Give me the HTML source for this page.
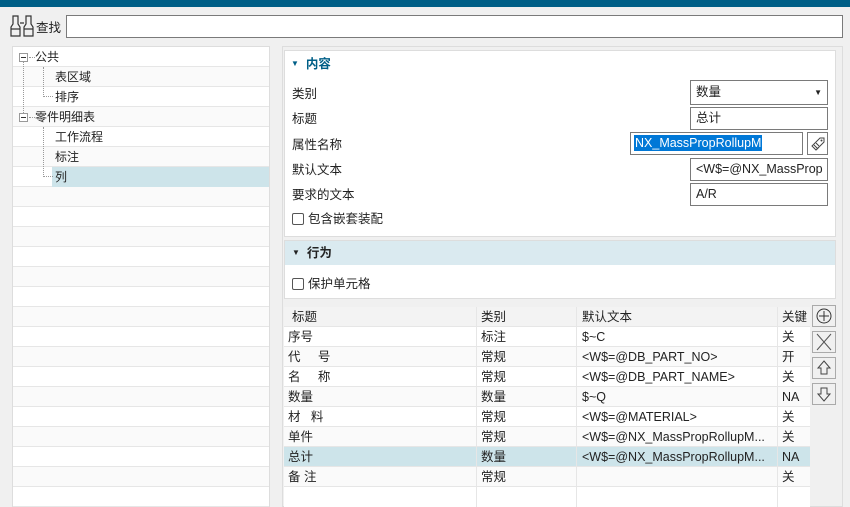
<!DOCTYPE html>
<html><head><meta charset="utf-8"><style>
*{box-sizing:border-box;margin:0;padding:0}
body{width:850px;height:507px;overflow:hidden;background:#f0f0f0;font-family:"Liberation Sans","Noto Sans CJK SC",sans-serif;font-size:12px;color:#222;position:relative}
.abs{position:absolute}
.title{left:0;top:0;width:850px;height:7px;background:#005f87}
.search{left:66px;top:15px;width:777px;height:23px;background:#fff;border:1px solid #7a7a7a}
.tree{left:12px;top:46px;width:258px;height:461px;background:#fff;border:1px solid #ddd}
.tr{position:absolute;left:0;width:256px;height:20px;border-bottom:1px solid #e6e6e6;line-height:20px}
.tr:nth-child(even){background:#fafafa}
.inp{position:absolute;background:#fff;border:1px solid #7a7a7a;height:23px;line-height:21px;padding-left:5px;font-size:12.5px;overflow:hidden;white-space:nowrap}
.lbl{position:absolute;left:292px;font-size:12.5px}
.cb{display:inline-block;width:12px;height:12px;border:1px solid #555;border-radius:2px;vertical-align:-2px;margin-right:4px;background:#fff}
.tbl{left:284px;top:307px;width:526px;height:200px;background:#fff}
.row{position:absolute;left:0;width:526px;height:20px;border-bottom:1px solid #e6e6e6;line-height:21px;font-size:12.5px}
.row span{position:absolute;top:0}
.c1{left:4px}.c2{left:197px}.c3{left:298px}.c4{left:498px}
.vl{position:absolute;top:0;width:1px;height:200px;background:#e6e6e6}
.btn{position:absolute;left:812px;width:24px;height:22px;border:1px solid #aaa;background:#f0f0f0}
.mb{position:absolute;left:6px;top:6px;width:9px;height:9px;border:1px solid #999;background:#fff}
.mb:after{content:"";position:absolute;left:1px;top:3px;width:5px;height:1px;background:#333}
</style></head><body>
<div class="abs title"></div>
<svg class="abs" style="left:10px;top:15px" width="24" height="22" viewBox="0 0 24 22"><g fill="none" stroke="#333" stroke-width="1.2"><path d="M3 1h5v8l2 3v9H1v-9l2-3z"/><path d="M16 1h5v8l2 3v9h-9v-9l2-3z"/><path d="M10 8h4M1 14h9M14 14h9"/></g></svg>
<div class="abs" style="left:36px;top:17px;font-size:12.5px">查找</div>
<div class="abs search"></div>
<div class="abs tree">
<div class="tr" style="top:0"><span class="mb"></span><span style="position:absolute;left:22px">公共</span></div>
<div class="tr" style="top:20px"><span style="position:absolute;left:42px">表区域</span></div>
<div class="tr" style="top:40px"><span style="position:absolute;left:42px">排序</span></div>
<div class="tr" style="top:60px"><span class="mb"></span><span style="position:absolute;left:22px">零件明细表</span></div>
<div class="tr" style="top:80px"><span style="position:absolute;left:42px">工作流程</span></div>
<div class="tr" style="top:100px"><span style="position:absolute;left:42px">标注</span></div>
<div class="tr" style="top:120px"><span style="position:absolute;left:39px;width:217px;height:20px;background:#cde4ea;padding-left:3px">列</span></div>
<div class="tr" style="top:140px"></div><div class="tr" style="top:160px"></div><div class="tr" style="top:180px"></div><div class="tr" style="top:200px"></div><div class="tr" style="top:220px"></div><div class="tr" style="top:240px"></div><div class="tr" style="top:260px"></div><div class="tr" style="top:280px"></div><div class="tr" style="top:300px"></div><div class="tr" style="top:320px"></div><div class="tr" style="top:340px"></div><div class="tr" style="top:360px"></div><div class="tr" style="top:380px"></div><div class="tr" style="top:400px"></div><div class="tr" style="top:420px"></div><div class="tr" style="top:440px"></div>
<div style="position:absolute;left:10px;top:15px;height:51px;border-left:1px dotted #999"></div>
<div style="position:absolute;left:16px;top:10px;width:6px;border-top:1px dotted #999"></div>
<div style="position:absolute;left:16px;top:70px;width:6px;border-top:1px dotted #999"></div>
<div style="position:absolute;left:30px;top:20px;width:10px;height:30px;border-left:1px dotted #999;border-bottom:1px dotted #999"></div>
<div style="position:absolute;left:40px;top:30px;width:0;border-top:1px dotted #999"></div>
<div style="position:absolute;left:30px;top:80px;width:10px;height:50px;border-left:1px dotted #999;border-bottom:1px dotted #999"></div>
</div>
<div class="abs" style="left:282px;top:46px;width:561px;height:461px;border:1px solid #ddd;background:#f0f0f0"></div>
<div class="abs" style="left:284px;top:50px;width:552px;height:187px;background:#fff;border:1px solid #ddd"></div>
<div class="abs" style="left:291px;top:53px;color:#005f87;font-weight:bold;font-size:12.5px"><span style="font-size:8px;vertical-align:2px">▼</span>&nbsp; 内容</div>
<div class="lbl" style="top:83px">类别</div>
<div class="lbl" style="top:108px">标题</div>
<div class="lbl" style="top:134px">属性名称</div>
<div class="lbl" style="top:159px">默认文本</div>
<div class="lbl" style="top:184px">要求的文本</div>
<div class="lbl" style="top:208px"><span class="cb"></span>包含嵌套装配</div>
<div class="inp" style="left:690px;top:80px;width:138px;height:25px;line-height:23px">数量<span style="position:absolute;right:5px;font-size:8px">▼</span></div>
<div class="inp" style="left:690px;top:107px;width:138px">总计</div>
<div class="inp" style="left:630px;top:132px;width:173px;padding-left:3px"><span style="background:#0078d7;color:#fff;padding:1px 1px">NX_MassPropRollupM</span></div>
<div class="inp" style="left:807px;top:132px;width:21px;padding:0"><svg width="19" height="21" viewBox="0 0 19 21"><path d="M4 13l8-8h4v4l-8 8z" fill="none" stroke="#444"/><circle cx="13.5" cy="7.5" r="1" fill="#444"/><path d="M6 12l4 4M8 10l3 3" stroke="#444"/></svg></div>
<div class="inp" style="left:690px;top:158px;width:138px">&lt;W$=@NX_MassProp</div>
<div class="inp" style="left:690px;top:183px;width:138px">A/R</div>
<div class="abs" style="left:284px;top:240px;width:552px;height:59px;background:#fff;border:1px solid #ddd"></div>
<div class="abs" style="left:285px;top:241px;width:550px;height:24px;background:#daeaf0;line-height:24px;padding-left:7px;font-weight:bold;font-size:12.5px"><span style="font-size:8px;vertical-align:2px">▼</span>&nbsp; 行为</div>
<div class="lbl" style="top:273px"><span class="cb"></span>保护单元格</div>
<div class="abs tbl">
<div class="row" style="top:0;background:#f3f3f3"><span class="c1" style="left:8px">标题</span><span class="c2">类别</span><span class="c3">默认文本</span><span class="c4">关键</span></div>
<div class="row" style="top:20px"><span class="c1">序号</span><span class="c2">标注</span><span class="c3">$~C</span><span class="c4">关</span></div>
<div class="row" style="top:40px;background:#fafafa"><span class="c1">代&nbsp;&nbsp;&nbsp;&nbsp;&nbsp;号</span><span class="c2">常规</span><span class="c3">&lt;W$=@DB_PART_NO&gt;</span><span class="c4">开</span></div>
<div class="row" style="top:60px"><span class="c1">名&nbsp;&nbsp;&nbsp;&nbsp;&nbsp;称</span><span class="c2">常规</span><span class="c3">&lt;W$=@DB_PART_NAME&gt;</span><span class="c4">关</span></div>
<div class="row" style="top:80px;background:#fafafa"><span class="c1">数量</span><span class="c2">数量</span><span class="c3">$~Q</span><span class="c4">NA</span></div>
<div class="row" style="top:100px"><span class="c1">材&nbsp;&nbsp;&nbsp;料</span><span class="c2">常规</span><span class="c3">&lt;W$=@MATERIAL&gt;</span><span class="c4">关</span></div>
<div class="row" style="top:120px;background:#fafafa"><span class="c1">单件</span><span class="c2">常规</span><span class="c3">&lt;W$=@NX_MassPropRollupM...</span><span class="c4">关</span></div>
<div class="row" style="top:140px;background:#cde4ea"><span class="c1">总计</span><span class="c2">数量</span><span class="c3">&lt;W$=@NX_MassPropRollupM...</span><span class="c4">NA</span></div>
<div class="row" style="top:160px;background:#fafafa"><span class="c1">备 注</span><span class="c2">常规</span><span class="c4">关</span></div>
<div class="vl" style="left:192px"></div><div class="vl" style="left:292px"></div><div class="vl" style="left:493px"></div>
</div>
<div class="btn" style="top:305px"><svg width="22" height="20"><circle cx="11" cy="10" r="7" fill="none" stroke="#333"/><path d="M11 5v10M6 10h10" stroke="#333"/></svg></div>
<div class="btn" style="top:331px"><svg width="22" height="20"><path d="M4 2l14 16M18 2L4 18" stroke="#555"/></svg></div>
<div class="btn" style="top:357px"><svg width="22" height="20"><path d="M11 3l6 7h-3v6h-6v-6h-3z" fill="none" stroke="#444"/></svg></div>
<div class="btn" style="top:383px"><svg width="22" height="20"><path d="M11 17l6-7h-3v-6h-6v6h-3z" fill="none" stroke="#444"/></svg></div>
</body></html>
